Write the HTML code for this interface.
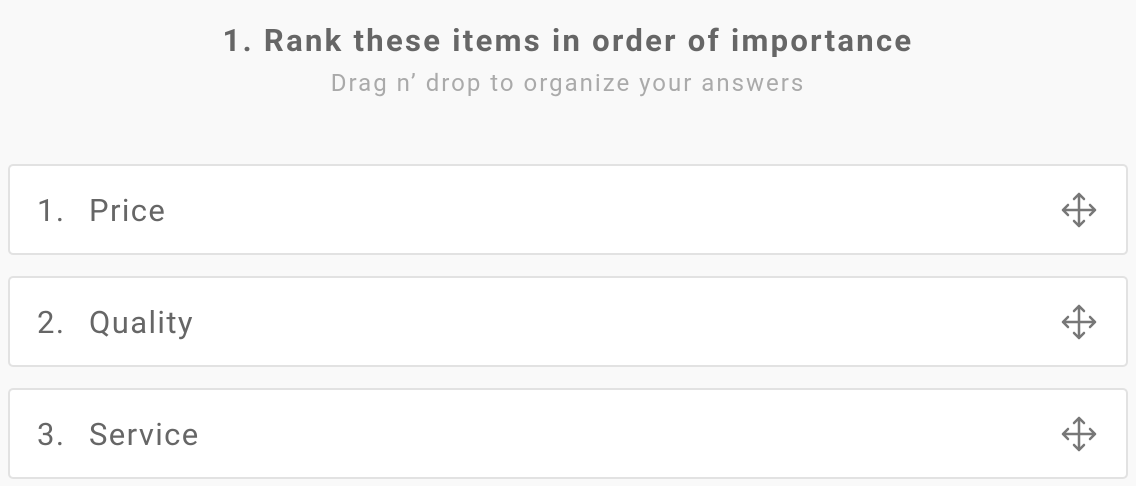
<!DOCTYPE html>
<html><head><style>
body{margin:0;width:1136px;height:486px;background:#f9f9f9;font-family:"Roboto","Liberation Sans",sans-serif;overflow:hidden;position:relative}
.t{position:absolute;left:0;width:1136px;text-align:center;top:22px;font-size:31px;font-weight:bold;color:#666;letter-spacing:2.3px}
.s{position:absolute;left:0;width:1136px;text-align:center;top:69px;font-size:24px;color:#aaa;letter-spacing:2px}
.c{position:absolute;left:8px;width:1116px;height:87px;background:#fff;border:2px solid #e2e2e2;border-radius:5px;box-sizing:content-box}
.n{position:absolute;left:27px;top:26px;font-size:31px;color:#666;letter-spacing:1.4px}
.w{position:absolute;left:79px;top:26px;font-size:31px;color:#666;letter-spacing:1.4px}
svg{position:absolute;left:1051px;top:26px}
</style></head><body>
<div class="t">1. Rank these items in order of importance</div>
<div class="s">Drag n’ drop to organize your answers</div>
<div class="c" style="top:164px"><span class="n">1.</span><span class="w">Price</span>
<svg width="36" height="36" viewBox="0 0 36 36" fill="none" stroke="#777" stroke-width="2.5" stroke-linecap="round" stroke-linejoin="round"><path d="M18 2V34M2 18H34M13 7L18 2L23 7M13 29L18 34L23 29M7 13L2 18L7 23M29 13L34 18L29 23"/></svg></div>
<div class="c" style="top:276px"><span class="n">2.</span><span class="w">Quality</span>
<svg width="36" height="36" viewBox="0 0 36 36" fill="none" stroke="#777" stroke-width="2.5" stroke-linecap="round" stroke-linejoin="round"><path d="M18 2V34M2 18H34M13 7L18 2L23 7M13 29L18 34L23 29M7 13L2 18L7 23M29 13L34 18L29 23"/></svg></div>
<div class="c" style="top:388px"><span class="n">3.</span><span class="w">Service</span>
<svg width="36" height="36" viewBox="0 0 36 36" fill="none" stroke="#777" stroke-width="2.5" stroke-linecap="round" stroke-linejoin="round"><path d="M18 2V34M2 18H34M13 7L18 2L23 7M13 29L18 34L23 29M7 13L2 18L7 23M29 13L34 18L29 23"/></svg></div>
</body></html>
